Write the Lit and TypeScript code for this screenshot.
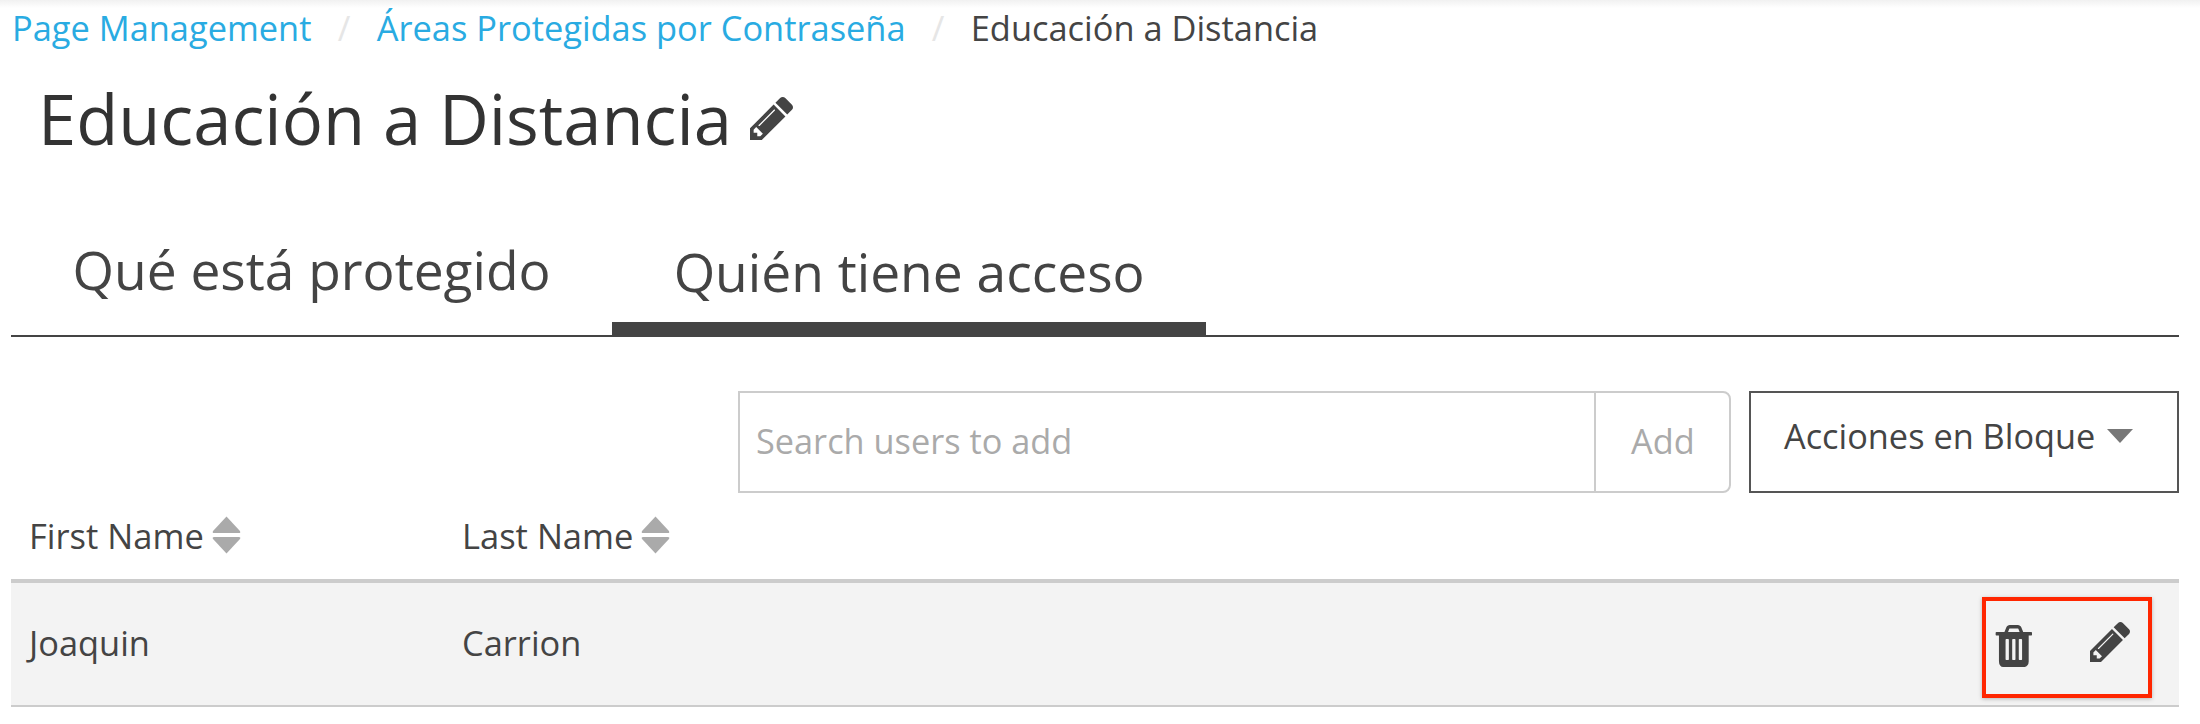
import { LitElement, html, css, svg } from "lit";
import { customElement } from "lit/decorators.js";

const pencil = (cls: string) => html`<svg class=${cls} viewBox="128 149 1515 1515" fill="currentColor">
  <path d="M491 1536l91-91-235-235-91 91v107h128v128h107zm523-928q0-22-22-22-10 0-17 7l-542 542q-7 7-7 17 0 22 22 22 10 0 17-7l542-542q7-7 7-17zm-54-192l416 416-832 832h-416v-416zm683 96q0 53-37 90l-166 166-416-416 166-165q36-38 90-38 53 0 91 38l235 234q37 39 37 91z"></path>
</svg>`;

const trash = html`<svg class="trash" viewBox="128 128 1472 1536" preserveAspectRatio="none" fill="currentColor">
  <path d="M704 1376v-704q0-14-9-23t-23-9h-64q-14 0-23 9t-9 23v704q0 14 9 23t23 9h64q14 0 23-9t9-23zm256 0v-704q0-14-9-23t-23-9h-64q-14 0-23 9t-9 23v704q0 14 9 23t23 9h64q14 0 23-9t9-23zm256 0v-704q0-14-9-23t-23-9h-64q-14 0-23 9t-9 23v704q0 14 9 23t23 9h64q14 0 23-9t9-23zm-544-992h448l-48-117q-7-9-17-11h-317q-10 2-17 11zm928 32v64q0 14-9 23t-23 9h-96v948q0 83-47 143.500t-113 60.500h-832q-66 0-113-58.500t-47-141.500v-952h-96q-14 0-23-9t-9-23v-64q0-14 9-23t23-9h309l70-167q15-37 54-63t79-26h320q40 0 79 26t54 63l70 167h309q14 0 23 9t9 23z"></path>
</svg>`;

const sortIcon = html`<svg class="sort" viewBox="0 0 28 38" preserveAspectRatio="none" fill="#aaaaaa">
  ${svg`<path d="M14 0.500 L27 15 Q28 17 26 17 L2 17 Q0 17 1 15 Z"></path>
  <path d="M14 37.500 L27 23 Q28 21 26 21 L2 21 Q0 21 1 23 Z"></path>`}
</svg>`;

@customElement("app-root")
export class AppRoot extends LitElement {
  static styles = css`
    :host {
      display: block;
      height: 724px;
      box-sizing: border-box;
      padding: 0 21px 0 11px;
      background: linear-gradient(#f1f1f1, #ffffff 8px);
      font-family: "Open Sans", "Liberation Sans", sans-serif;
      color: #444444;
      overflow: hidden;
    }
    .crumbs {
      display: flex;
      align-items: center;
      height: 56px;
      margin-bottom: 2px;
      font-size: 34.4px;
      line-height: 56px;
      padding-left: 1px;
    }
    .crumbs a {
      color: #29abe2;
      text-decoration: none;
    }
    .sep {
      color: #e6e6e6;
      margin: 0 26.3px;
    }
    .title {
      display: flex;
      align-items: center;
      height: 120px;
      margin: 0 0 0 27px;
      font-size: 68.7px;
      font-weight: 400;
      color: #333333;
    }
    .title-pencil {
      width: 43px;
      height: 43px;
      margin-left: 18px;
      color: #444444;
    }
    .tabs {
      display: flex;
      height: 159px;
      box-sizing: border-box;
      align-items: flex-end;
      border-bottom: 2px solid #444444;
    }
    .tab {
      box-sizing: border-box;
      height: 110px;
      padding: 0 61.5px;
      font-size: 53.3px;
      line-height: 90px;
      white-space: nowrap;
    }
    .tab.active {
      margin-bottom: -2px;
      border-bottom: 15px solid #444444;
    }
    .toolbar {
      display: flex;
      justify-content: flex-end;
      gap: 18px;
      margin-top: 54px;
      height: 102px;
    }
    .search {
      display: flex;
      box-sizing: border-box;
      width: 993px;
      border: 2px solid #cccccc;
      border-radius: 0 8px 8px 0;
      font-size: 34.3px;
      color: #aaaaaa;
    }
    .placeholder {
      flex: 1;
      padding-left: 16px;
      line-height: 96px;
    }
    .add {
      box-sizing: border-box;
      width: 135px;
      border-left: 2px solid #cccccc;
      padding-left: 35px;
      line-height: 96px;
    }
    .bulk {
      display: flex;
      box-sizing: border-box;
      width: 430px;
      border: 2px solid #555555;
      padding-left: 33px;
      font-size: 34.3px;
      line-height: 86px;
      color: #444444;
    }
    .caret {
      width: 0;
      height: 0;
      margin: 36px 0 0 12px;
      border-left: 13px solid transparent;
      border-right: 13px solid transparent;
      border-top: 14px solid #777777;
    }
    .row {
      display: flex;
      align-items: center;
    }
    .cell {
      display: flex;
      align-items: center;
      box-sizing: border-box;
      width: 433px;
      padding-left: 18px;
      white-space: nowrap;
    }
    .head {
      height: 90px;
      font-size: 34.5px;
      border-bottom: 4px solid #cccccc;
      padding-bottom: 2px;
      box-sizing: border-box;
    }
    .sort {
      width: 29px;
      height: 38px;
      margin-left: 8px;
    }
    .body {
      height: 124px;
      box-sizing: border-box;
      font-size: 34.4px;
      background: #f3f3f3;
      border-bottom: 2px solid #cccccc;
    }
    .body .cell {
      padding-bottom: 3px;
    }
    .actions {
      display: flex;
      align-items: center;
      box-sizing: border-box;
      width: 170px;
      height: 101px;
      margin: 7px 27px 0 auto;
      padding: 0 0 0 8px;
      border: 4px solid #ff2600;
      box-shadow: 0 1px 4px rgba(0, 0, 0, 0.25);
      color: #444444;
    }
    .trash {
      width: 38px;
      height: 42px;
      margin: -4px 0 0 0;
    }
    .row-pencil {
      width: 40px;
      height: 40px;
      margin: -11px 0 0 58px;
    }
  `;

  render() {
    return html`
      <nav class="crumbs">
        <a href="#">Page Management</a><span class="sep">/</span>
        <a href="#">Áreas Protegidas por Contraseña</a><span class="sep">/</span>
        <span>Educación a Distancia</span>
      </nav>
      <h1 class="title">Educación a Distancia${pencil("title-pencil")}</h1>
      <div class="tabs">
        <div class="tab">Qué está protegido</div>
        <div class="tab active">Quién tiene acceso</div>
      </div>
      <div class="toolbar">
        <div class="search">
          <div class="placeholder">Search users to add</div>
          <div class="add">Add</div>
        </div>
        <div class="bulk">Acciones en Bloque<span class="caret"></span></div>
      </div>
      <div class="row head">
        <div class="cell">First Name${sortIcon}</div>
        <div class="cell">Last Name${sortIcon}</div>
      </div>
      <div class="row body">
        <div class="cell">Joaquin</div>
        <div class="cell">Carrion</div>
        <div class="actions">${trash}${pencil("row-pencil")}</div>
      </div>
    `;
  }
}
